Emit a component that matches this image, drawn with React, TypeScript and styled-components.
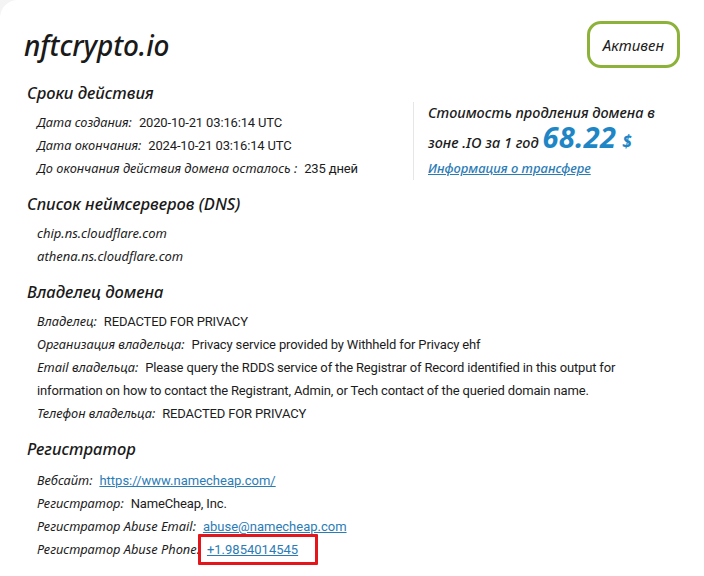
import React from "react";
import styled, { createGlobalStyle } from "styled-components";

const Global = createGlobalStyle`
  html, body { margin: 0; padding: 0; background: #f4f4f4; }
  body { font-family: "Noto Sans", sans-serif; color: #1c1c1c; }
  * { box-sizing: border-box; }
`;

const Card = styled.div`
  background: #fff;
  border-radius: 18px 0 0 0;
  min-height: 576px;
  padding: 21px 24px 0 24px;
`;

const Header = styled.div`
  display: flex;
  justify-content: space-between;
  align-items: flex-start;
`;

const Title = styled.h1`
  margin: 9px 0 0 0;
  font-family: "Noto Sans", sans-serif;
  font-style: italic;
  font-weight: 500;
  font-size: 28px;
  line-height: 30px;
  color: #1a1a1a;
  letter-spacing: -0.1px;
`;

const Badge = styled.div`
  height: 47px;
  padding: 0 13px;
  border: 3px solid #8db23a;
  border-radius: 14px;
  display: flex;
  align-items: center;
  font-style: italic;
  font-size: 15px;
  font-weight: 400;
  color: #1c1c1c;
`;

const Top = styled.div`
  display: flex;
  align-items: flex-end;
  margin-top: 13px;
`;

const LeftCol = styled.div`
  width: 389px;
`;

const PriceBox = styled.div`
  border-left: 1px solid #e6e6e6;
  padding: 0 0 2px 14px;
`;

const PriceLine = styled.div<{ $h: number }>`
  font-style: italic;
  font-size: 14.5px;
  line-height: ${(p) => p.$h}px;
  color: #1c1c1c;
  white-space: nowrap;
  font-weight: 500;
`;

const Price = styled.span`
  display: inline-block;
  font-style: italic;
  font-weight: 700;
  font-size: 29px;
  line-height: 30px;
  color: #1f86c6;
  margin-left: 4px;
  letter-spacing: 0.3px;
`;

const Currency = styled.span`
  font-style: italic;
  font-weight: 700;
  font-size: 17px;
  color: #1f86c6;
  margin-left: 6px;
`;

const ItalicLink = styled.a`
  font-style: italic;
  font-size: 13px;
  color: #2b7cb6;
  text-decoration: underline;
`;

const Section = styled.section<{ $gap?: number }>`
  margin-top: ${(p) => p.$gap ?? 12}px;
`;

const Heading = styled.h2<{ $mb?: number }>`
  margin: 0 0 ${(p) => p.$mb ?? 6}px 3px;
  font-style: italic;
  font-weight: 500;
  font-size: 16.5px;
  line-height: 24px;
  color: #1a1a1a;
`;

const Row = styled.div`
  padding-left: 13px;
  max-width: 640px;
  font-size: 13px;
  line-height: 23px;
`;

const Label = styled.span`
  font-family: "Noto Sans", sans-serif;
  font-style: italic;
  font-size: 12.8px;
  color: #1c1c1c;
  margin-right: 7px;
`;

const Value = styled.span`
  font-family: Roboto, sans-serif;
  font-size: 13px;
  color: #1c1c1c;
  letter-spacing: -0.15px;
`;

const Plain = styled.span`
  font-style: italic;
  font-size: 13px;
  color: #1c1c1c;
`;

const Link = styled.a`
  font-family: Roboto, sans-serif;
  font-size: 13px;
  color: #2b7cb6;
  text-decoration: underline;
`;

const Marked = styled.span`
  position: relative;
  &::after {
    content: "";
    position: absolute;
    left: -9px;
    right: -20px;
    top: -6px;
    bottom: -7px;
    border: 3px solid #e4161b;
    border-radius: 1px;
    pointer-events: none;
  }
`;

export default function App() {
  return (
    <>
      <Global />
      <Card>
        <Header>
          <Title>nftcrypto.io</Title>
          <Badge>Активен</Badge>
        </Header>

        <Top>
          <LeftCol>
            <Heading>Сроки действия</Heading>
            <Row>
              <Label>Дата создания:</Label>
              <Value>2020-10-21 03:16:14 UTC</Value>
            </Row>
            <Row>
              <Label>Дата окончания:</Label>
              <Value>2024-10-21 03:16:14 UTC</Value>
            </Row>
            <Row>
              <Label>До окончания действия домена осталось :</Label>
              <Value>235 дней</Value>
            </Row>
          </LeftCol>
          <PriceBox>
            <PriceLine $h={20}>Стоимость продления домена в</PriceLine>
            <PriceLine $h={30}>
              зоне .IO за 1 год<Price>68.22</Price>
              <Currency>$</Currency>
            </PriceLine>
            <PriceLine $h={20}>
              <ItalicLink href="#">Информация о трансфере</ItalicLink>
            </PriceLine>
          </PriceBox>
        </Top>

        <Section>
          <Heading>Список неймсерверов (DNS)</Heading>
          <Row>
            <Plain>chip.ns.cloudflare.com</Plain>
          </Row>
          <Row>
            <Plain>athena.ns.cloudflare.com</Plain>
          </Row>
        </Section>

        <Section>
          <Heading>Владелец домена</Heading>
          <Row>
            <Label>Владелец:</Label>
            <Value>REDACTED FOR PRIVACY</Value>
          </Row>
          <Row>
            <Label>Организация владельца:</Label>
            <Value>Privacy service provided by Withheld for Privacy ehf</Value>
          </Row>
          <Row>
            <Label>Email владельца:</Label>
            <Value>
              Please query the RDDS service of the Registrar of Record identified in this output for
              information on how to contact the Registrant, Admin, or Tech contact of the queried
              domain name.
            </Value>
          </Row>
          <Row>
            <Label>Телефон владельца:</Label>
            <Value>REDACTED FOR PRIVACY</Value>
          </Row>
        </Section>

        <Section>
          <Heading $mb={8}>Регистратор</Heading>
          <Row>
            <Label>Вебсайт:</Label>
            <Link href="#">https://www.namecheap.com/</Link>
          </Row>
          <Row>
            <Label>Регистратор:</Label>
            <Value>NameCheap, Inc.</Value>
          </Row>
          <Row>
            <Label>Регистратор Abuse Email:</Label>
            <Link href="#">abuse@namecheap.com</Link>
          </Row>
          <Row>
            <Label>Регистратор Abuse Phone:</Label>
            <Marked>
              <Link href="#">+1.9854014545</Link>
            </Marked>
          </Row>
        </Section>
      </Card>
    </>
  );
}
